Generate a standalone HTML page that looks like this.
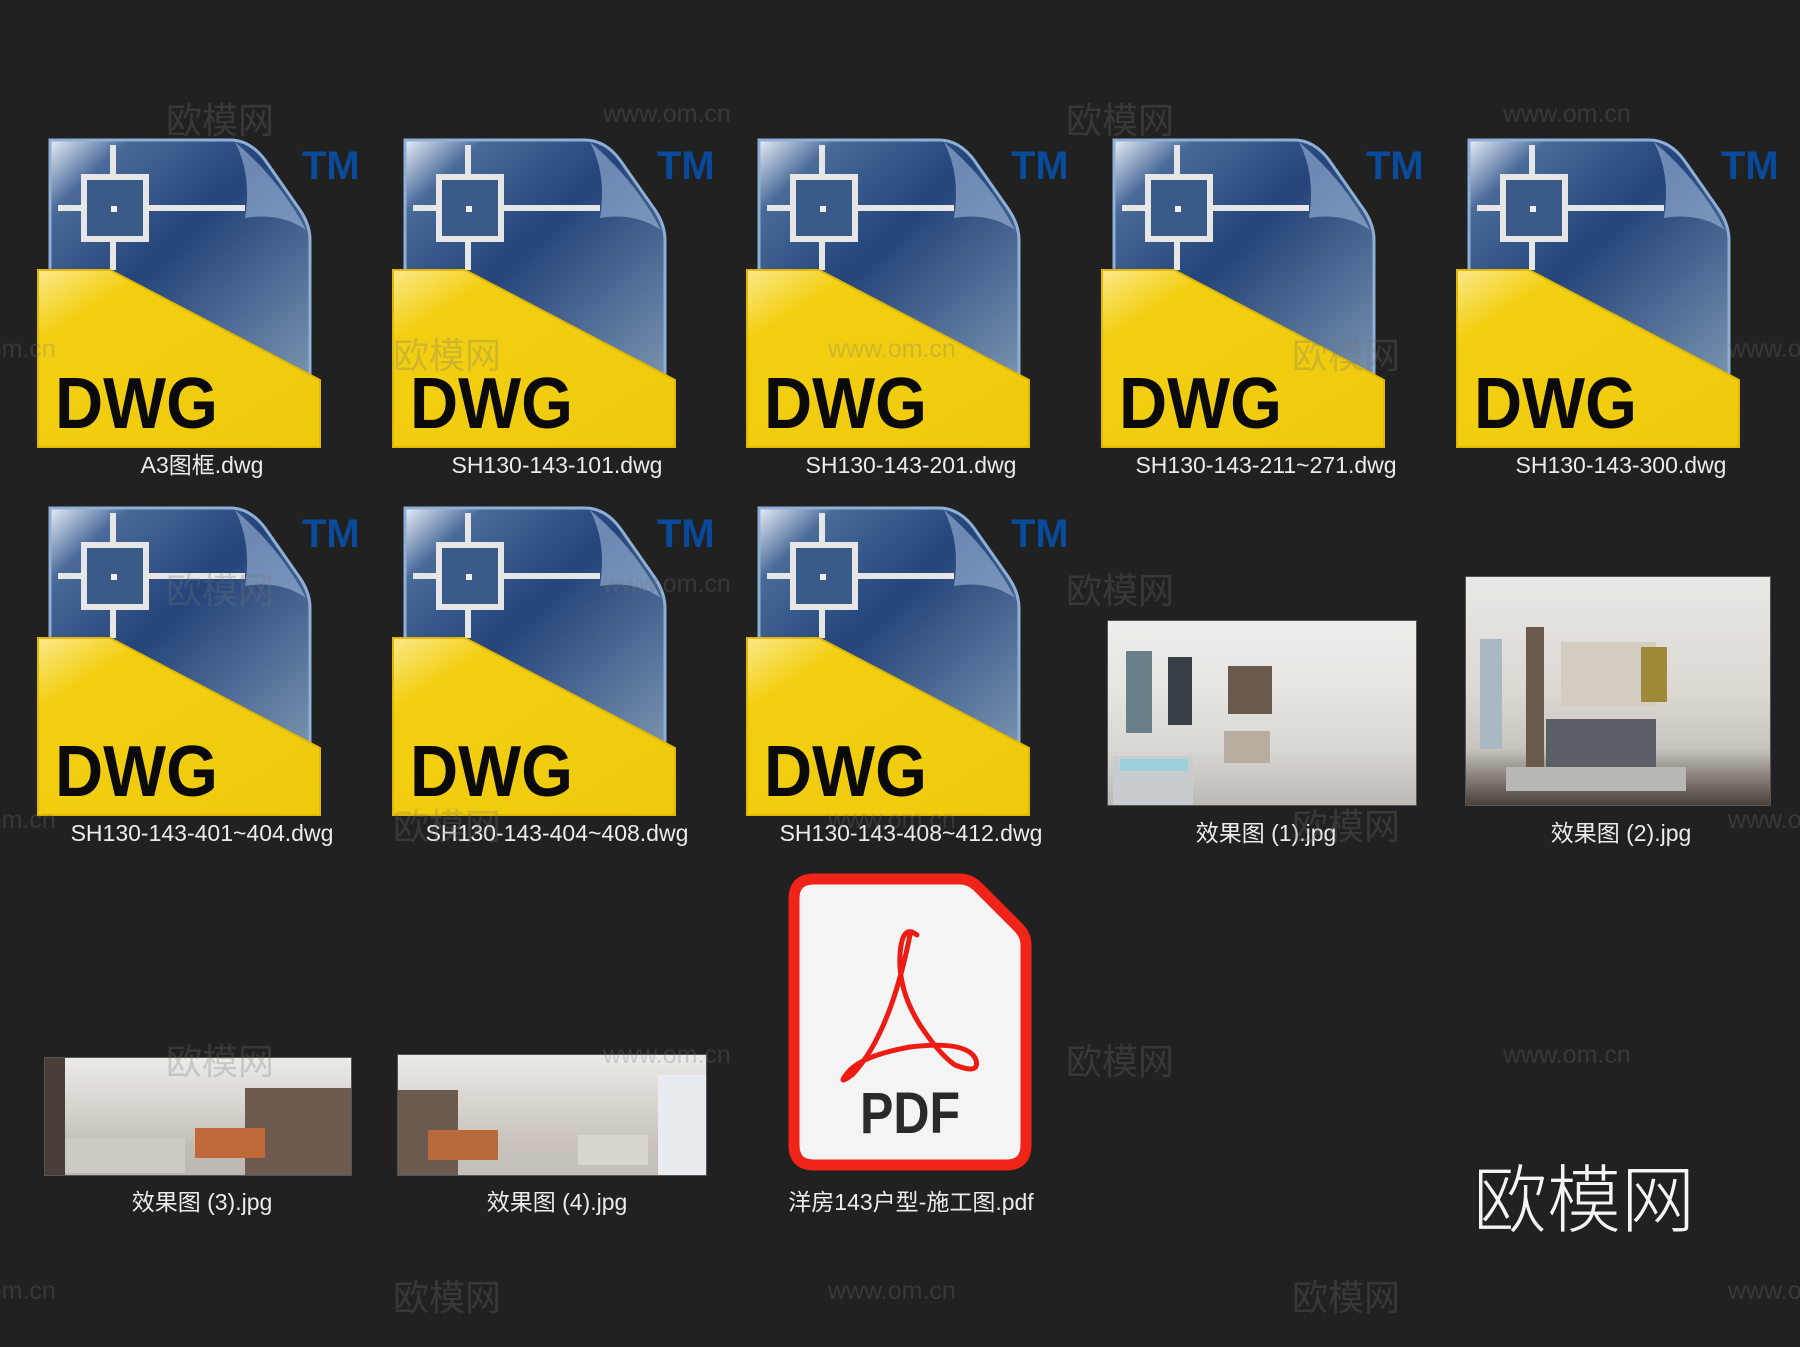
<!DOCTYPE html>
<html><head><meta charset="utf-8">
<style>
*{margin:0;padding:0;box-sizing:border-box}
body{width:1800px;height:1347px;background:#212121;position:relative;overflow:hidden;font-family:"Liberation Sans","Noto Sans CJK SC",sans-serif}
.ic{position:absolute;width:300px;height:330px}
.lb{position:absolute;width:360px;text-align:center;color:#ececec;font-size:23px;line-height:28px;font-family:"Liberation Sans","Noto Sans CJK SC",sans-serif}
.ph{position:absolute;overflow:hidden;border:1px solid #555}
.wm{position:absolute;color:rgba(120,120,120,0.28);font-family:"Liberation Sans","Noto Sans CJK SC",sans-serif;white-space:nowrap;z-index:5}
.wm.c{font-size:36px}
.wm.u{font-size:25px}
.tm{position:absolute;color:#0a4a9a;font:bold 40px 'Liberation Sans',sans-serif}
</style></head><body>
<svg width="0" height="0" style="position:absolute">
<defs>
<linearGradient id="bl" x1="0" y1="0" x2="1" y2="1">
<stop offset="0" stop-color="#e8eef6"/><stop offset="0.15" stop-color="#4a6a9a"/><stop offset="0.45" stop-color="#24447a"/><stop offset="1" stop-color="#7a94b0"/></linearGradient>
<linearGradient id="yl" x1="0" y1="0" x2="1" y2="1">
<stop offset="0" stop-color="#fbe98a"/><stop offset="0.2" stop-color="#f3cf12"/><stop offset="1" stop-color="#eec90c"/></linearGradient>
<symbol id="dwg" viewBox="0 0 300 330">
<path d="M20 10 H200 Q220 10 235 30 L270 80 Q280 95 280 110 V255 H20 Z" fill="url(#bl)" stroke="#8fb0d6" stroke-width="3"/>
<path d="M205 12 Q222 45 215 88 Q250 82 276 100 Q250 50 205 12 Z" fill="#9fb8d8" opacity="0.6"/>
<path d="M83 15 V140 M28 78 H215" stroke="#e6e6e6" stroke-width="6" fill="none"/>
<rect x="54" y="47" width="62" height="62" fill="#3a5a8a" stroke="#e6e6e6" stroke-width="6"/>
<rect x="81" y="76" width="6" height="6" fill="#eee"/>
<path d="M8 140 H80 L290 250 V317 H8 Z" fill="url(#yl)" stroke="#e0b800" stroke-width="2"/>
</symbol>
</defs></svg>

<svg class="ic" style="left:30px;top:130px"><use href="#dwg" width="300" height="330"/><text x="25" y="298" textLength="163" lengthAdjust="spacingAndGlyphs" font-family="Liberation Sans" font-weight="bold" font-size="72" fill="#0a0a0a">DWG</text></svg>
<svg class="ic" style="left:385px;top:130px"><use href="#dwg" width="300" height="330"/><text x="25" y="298" textLength="163" lengthAdjust="spacingAndGlyphs" font-family="Liberation Sans" font-weight="bold" font-size="72" fill="#0a0a0a">DWG</text></svg>
<svg class="ic" style="left:739px;top:130px"><use href="#dwg" width="300" height="330"/><text x="25" y="298" textLength="163" lengthAdjust="spacingAndGlyphs" font-family="Liberation Sans" font-weight="bold" font-size="72" fill="#0a0a0a">DWG</text></svg>
<svg class="ic" style="left:1094px;top:130px"><use href="#dwg" width="300" height="330"/><text x="25" y="298" textLength="163" lengthAdjust="spacingAndGlyphs" font-family="Liberation Sans" font-weight="bold" font-size="72" fill="#0a0a0a">DWG</text></svg>
<svg class="ic" style="left:1449px;top:130px"><use href="#dwg" width="300" height="330"/><text x="25" y="298" textLength="163" lengthAdjust="spacingAndGlyphs" font-family="Liberation Sans" font-weight="bold" font-size="72" fill="#0a0a0a">DWG</text></svg>
<svg class="ic" style="left:30px;top:498px"><use href="#dwg" width="300" height="330"/><text x="25" y="298" textLength="163" lengthAdjust="spacingAndGlyphs" font-family="Liberation Sans" font-weight="bold" font-size="72" fill="#0a0a0a">DWG</text></svg>
<svg class="ic" style="left:385px;top:498px"><use href="#dwg" width="300" height="330"/><text x="25" y="298" textLength="163" lengthAdjust="spacingAndGlyphs" font-family="Liberation Sans" font-weight="bold" font-size="72" fill="#0a0a0a">DWG</text></svg>
<svg class="ic" style="left:739px;top:498px"><use href="#dwg" width="300" height="330"/><text x="25" y="298" textLength="163" lengthAdjust="spacingAndGlyphs" font-family="Liberation Sans" font-weight="bold" font-size="72" fill="#0a0a0a">DWG</text></svg>

<div class="tm" style="left:302px;top:144px">TM</div>
<div class="tm" style="left:657px;top:144px">TM</div>
<div class="tm" style="left:1011px;top:144px">TM</div>
<div class="tm" style="left:1366px;top:144px">TM</div>
<div class="tm" style="left:1721px;top:144px">TM</div>
<div class="tm" style="left:302px;top:512px">TM</div>
<div class="tm" style="left:657px;top:512px">TM</div>
<div class="tm" style="left:1011px;top:512px">TM</div>

<div class="lb" style="left:22px;top:451px">A3图框.dwg</div>
<div class="lb" style="left:377px;top:451px">SH130-143-101.dwg</div>
<div class="lb" style="left:731px;top:451px">SH130-143-201.dwg</div>
<div class="lb" style="left:1086px;top:451px">SH130-143-211~271.dwg</div>
<div class="lb" style="left:1441px;top:451px">SH130-143-300.dwg</div>
<div class="lb" style="left:22px;top:819px">SH130-143-401~404.dwg</div>
<div class="lb" style="left:377px;top:819px">SH130-143-404~408.dwg</div>
<div class="lb" style="left:731px;top:819px">SH130-143-408~412.dwg</div>

<div class="ph" style="left:1107px;top:620px;width:310px;height:186px;background:linear-gradient(180deg,#eeeeec 0%,#e6e4e0 40%,#d8d6d2 70%,#bdbab6 100%)">
<div style="position:absolute;left:18px;top:30px;width:26px;height:82px;background:#6a8088"></div>
<div style="position:absolute;left:60px;top:36px;width:24px;height:68px;background:#3a4048"></div>
<div style="position:absolute;left:120px;top:45px;width:44px;height:48px;background:#6a5a4e"></div>
<div style="position:absolute;left:5px;top:135px;width:80px;height:50px;background:#c8ccd0"></div>
<div style="position:absolute;left:12px;top:138px;width:68px;height:12px;background:#9cd0d8"></div>
<div style="position:absolute;left:116px;top:110px;width:46px;height:32px;background:#b8aca0"></div>
</div>
<div class="ph" style="left:1465px;top:576px;width:306px;height:230px;background:linear-gradient(180deg,#e8e8e6 0%,#dcd8d2 50%,#c8c4be 75%,#4a403a 100%)">
<div style="position:absolute;left:14px;top:62px;width:22px;height:110px;background:#aab8c4"></div>
<div style="position:absolute;left:60px;top:50px;width:18px;height:140px;background:#6a5a4e"></div>
<div style="position:absolute;left:95px;top:65px;width:95px;height:65px;background:#d4ccc0"></div>
<div style="position:absolute;left:80px;top:142px;width:110px;height:50px;background:#5a5f68"></div>
<div style="position:absolute;left:175px;top:70px;width:26px;height:55px;background:#a08a3a"></div>
<div style="position:absolute;left:40px;top:190px;width:180px;height:24px;background:#b8b8b4"></div>
</div>
<div class="ph" style="left:44px;top:1057px;width:308px;height:119px;background:linear-gradient(180deg,#ecebe8 0%,#d6d2cc 45%,#c2bcb4 75%,#bcb8b2 100%)">
<div style="position:absolute;left:0;top:0;width:20px;height:119px;background:#4a3e38"></div>
<div style="position:absolute;left:200px;top:30px;width:108px;height:90px;background:#6e5a50"></div>
<div style="position:absolute;left:150px;top:70px;width:70px;height:30px;background:#c06a3a"></div>
<div style="position:absolute;left:20px;top:80px;width:120px;height:35px;background:#cfcac4"></div>
</div>
<div class="ph" style="left:397px;top:1054px;width:310px;height:122px;background:linear-gradient(180deg,#ecebe8 0%,#d6d2cc 45%,#c8c2ba 75%,#c4c0ba 100%)">
<div style="position:absolute;left:0;top:35px;width:60px;height:85px;background:#6a5a50"></div>
<div style="position:absolute;left:260px;top:20px;width:50px;height:100px;background:#e8ecf0"></div>
<div style="position:absolute;left:30px;top:75px;width:70px;height:30px;background:#b86a3a"></div>
<div style="position:absolute;left:180px;top:80px;width:70px;height:30px;background:#d8d4ce"></div>
</div>
<div class="lb" style="left:1086px;top:819px">效果图 (1).jpg</div>
<div class="lb" style="left:1441px;top:819px">效果图 (2).jpg</div>
<div class="lb" style="left:22px;top:1188px">效果图 (3).jpg</div>
<div class="lb" style="left:377px;top:1188px">效果图 (4).jpg</div>

<svg style="position:absolute;left:780px;top:865px" width="260" height="315" viewBox="0 0 260 315">
<path d="M34 14 H180 Q190 14 198 22 L238 62 Q246 70 246 80 V280 Q246 300 226 300 H34 Q14 300 14 280 V34 Q14 14 34 14 Z" fill="#f4f4f4" stroke="#f02418" stroke-width="11" stroke-linejoin="round"/>
<path d="M137 70 Q122 58 120 90 Q118 125 140 160 Q160 190 175 200 Q200 210 196 195 Q188 175 130 182 Q85 190 70 205 Q55 222 72 210 Q110 170 130 70" fill="none" stroke="#ec1c14" stroke-width="5" stroke-linecap="round"/>
<text x="130" y="268" text-anchor="middle" textLength="100" lengthAdjust="spacingAndGlyphs" font-family="Liberation Sans" font-weight="bold" font-size="58" fill="#2a2a2a">PDF</text>
</svg>
<div class="lb" style="left:731px;top:1188px">洋房143户型-施工图.pdf</div>

<div style="position:absolute;left:1473px;top:1150px;color:#f4f4f4;font-size:74px;line-height:90px;font-family:'Noto Sans CJK SC',sans-serif;font-weight:300">欧模网</div>

<div class="wm c" style="left:166px;top:92px">欧模网</div>
<div class="wm u" style="left:603px;top:100px">www.om.cn</div>
<div class="wm c" style="left:1066px;top:92px">欧模网</div>
<div class="wm u" style="left:1503px;top:100px">www.om.cn</div>
<div class="wm u" style="left:-72px;top:335px">www.om.cn</div>
<div class="wm c" style="left:393px;top:327px">欧模网</div>
<div class="wm u" style="left:828px;top:335px">www.om.cn</div>
<div class="wm c" style="left:1292px;top:327px">欧模网</div>
<div class="wm u" style="left:1728px;top:335px">www.om.cn</div>
<div class="wm c" style="left:166px;top:562px">欧模网</div>
<div class="wm u" style="left:603px;top:570px">www.om.cn</div>
<div class="wm c" style="left:1066px;top:562px">欧模网</div>
<div class="wm u" style="left:-72px;top:806px">www.om.cn</div>
<div class="wm c" style="left:393px;top:798px">欧模网</div>
<div class="wm u" style="left:828px;top:806px">www.om.cn</div>
<div class="wm c" style="left:1292px;top:798px">欧模网</div>
<div class="wm u" style="left:1728px;top:806px">www.om.cn</div>
<div class="wm c" style="left:166px;top:1033px">欧模网</div>
<div class="wm u" style="left:603px;top:1041px">www.om.cn</div>
<div class="wm c" style="left:1066px;top:1033px">欧模网</div>
<div class="wm u" style="left:1503px;top:1041px">www.om.cn</div>
<div class="wm u" style="left:-72px;top:1277px">www.om.cn</div>
<div class="wm c" style="left:393px;top:1269px">欧模网</div>
<div class="wm u" style="left:828px;top:1277px">www.om.cn</div>
<div class="wm c" style="left:1292px;top:1269px">欧模网</div>
<div class="wm u" style="left:1728px;top:1277px">www.om.cn</div>
</body></html>
